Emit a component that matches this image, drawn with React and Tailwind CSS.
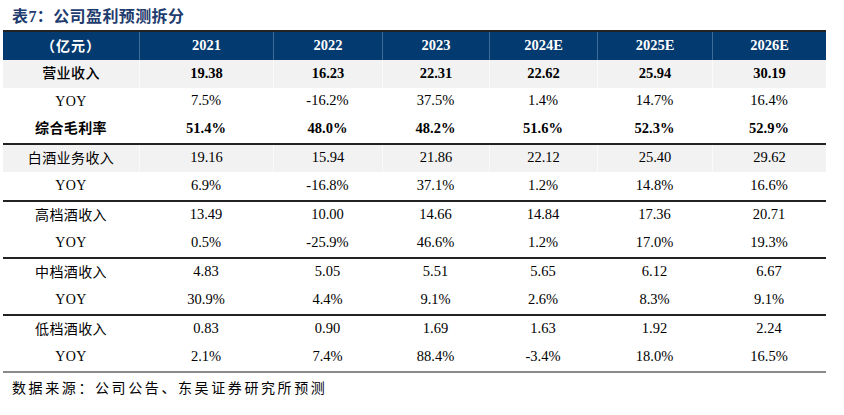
import React from "react";

const cols = "grid grid-cols-[136px_134px_109px_107px_108px_115px_114px]";
const years = ["2021", "2022", "2023", "2024E", "2025E", "2026E"];

const groups = [
  [
    { label: "营业收入", vals: ["19.38", "16.23", "22.31", "22.62", "25.94", "30.19"], gray: true, bold: true, boldLabel: false },
    { label: "YOY", vals: ["7.5%", "-16.2%", "37.5%", "1.4%", "14.7%", "16.4%"] },
    { label: "综合毛利率", vals: ["51.4%", "48.0%", "48.2%", "51.6%", "52.3%", "52.9%"], bold: true, boldLabel: true },
  ],
  [
    { label: "白酒业务收入", vals: ["19.16", "15.94", "21.86", "22.12", "25.40", "29.62"], gray: true },
    { label: "YOY", vals: ["6.9%", "-16.8%", "37.1%", "1.2%", "14.8%", "16.6%"] },
  ],
  [
    { label: "高档酒收入", vals: ["13.49", "10.00", "14.66", "14.84", "17.36", "20.71"] },
    { label: "YOY", vals: ["0.5%", "-25.9%", "46.6%", "1.2%", "17.0%", "19.3%"] },
  ],
  [
    { label: "中档酒收入", vals: ["4.83", "5.05", "5.51", "5.65", "6.12", "6.67"] },
    { label: "YOY", vals: ["30.9%", "4.4%", "9.1%", "2.6%", "8.3%", "9.1%"] },
  ],
  [
    { label: "低档酒收入", vals: ["0.83", "0.90", "1.69", "1.63", "1.92", "2.24"] },
    { label: "YOY", vals: ["2.1%", "7.4%", "88.4%", "-3.4%", "18.0%", "16.5%"] },
  ],
];

function Row({ r }) {
  return (
    <div className={`${cols} h-[27.5px] ${r.gray ? "bg-[#f2f2f2]" : "bg-white"}`}>
      <div
        className={`flex items-center justify-center text-[14px] tracking-[0.4px] ${
          r.boldLabel ? "font-bold" : r.label === "营业收入" ? "font-medium" : "font-normal"
        }`}
      >
        {r.label}
      </div>
      {r.vals.map((v, i) => (
        <div
          key={i}
          className={`flex items-center justify-center text-[14.5px] ${r.bold ? "font-bold" : "font-normal"} ${
            r.gray ? "border-l border-[#fafafa]" : ""
          }`}
        >
          {v}
        </div>
      ))}
    </div>
  );
}

export default function App() {
  return (
    <div
      className="w-[844px] h-[415px] bg-white text-black overflow-hidden"
      style={{ fontFamily: '"Liberation Serif", "Noto Sans CJK SC", serif' }}
    >
      <div className="h-[30px] pt-[4px] pl-[12px] flex items-center text-[16px] font-bold tracking-[0.4px] text-[#1f3c6e]">
        表7：公司盈利预测拆分
      </div>
      <div className="ml-[3px] w-[823px] border-t-2 border-[#222]">
        <div className={`${cols} h-[28px] bg-[#033a6f] text-white font-bold`}>
          <div className="flex items-center justify-center text-[14px] tracking-[1px]">（亿元）</div>
          {years.map((y) => (
            <div key={y} className="flex items-center justify-center text-[14.5px] border-l border-[#3f6b98]">
              {y}
            </div>
          ))}
        </div>
        {groups.map((g, gi) => (
          <div key={gi} className={gi > 0 ? "border-t-2 border-[#222]" : ""}>
            {g.map((r, ri) => (
              <Row key={ri} r={r} />
            ))}
          </div>
        ))}
        <div className="border-t-2 border-[#8a8a8a]" />
      </div>
      <div className="h-[32px] pl-[12px] flex items-center text-[14px] tracking-[2.6px]">
        数据来源：公司公告、东吴证券研究所预测
      </div>
    </div>
  );
}
